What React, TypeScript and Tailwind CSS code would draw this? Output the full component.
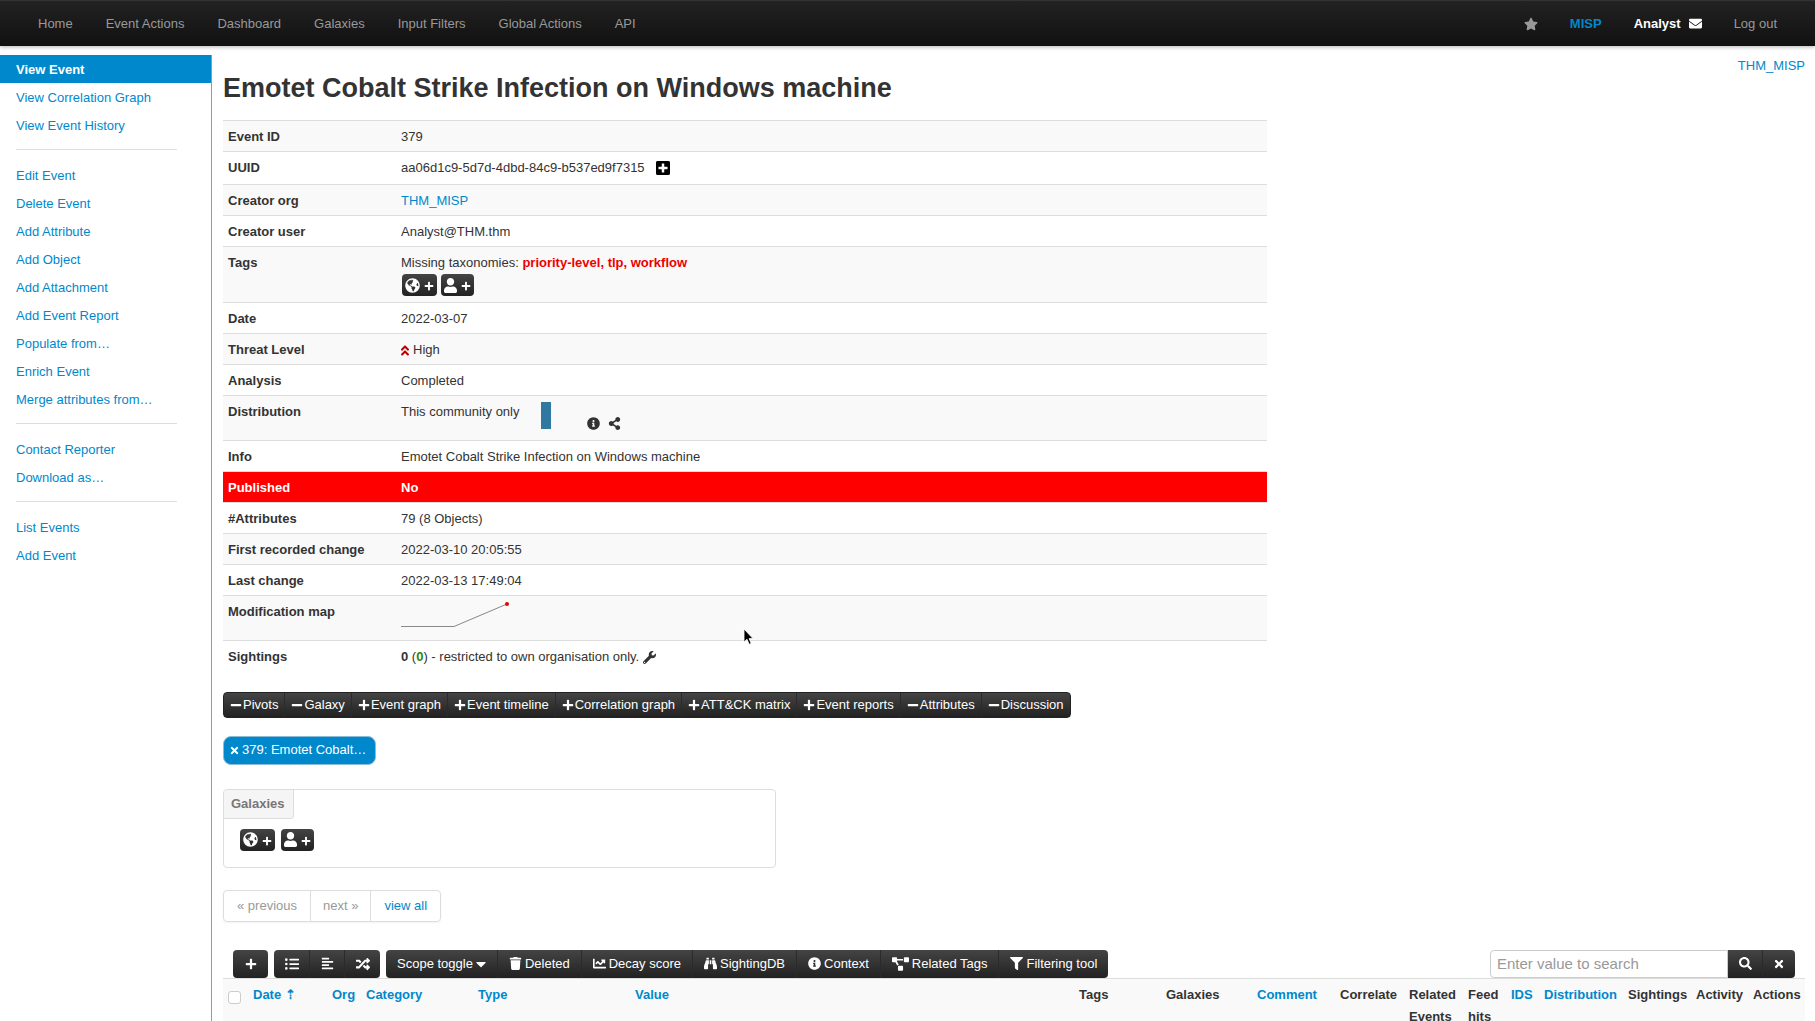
import React from 'react';
import {
  FaAlignLeft,
  FaAngleDoubleUp,
  FaBinoculars,
  FaCaretDown,
  FaChartLine,
  FaEnvelope,
  FaFilter,
  FaGlobeAmericas,
  FaInfoCircle,
  FaListUl,
  FaMinus,
  FaPlus,
  FaPlusSquare,
  FaProjectDiagram,
  FaRandom,
  FaSearch,
  FaShareAlt,
  FaStar,
  FaTimes,
  FaTrash,
  FaUser,
  FaWrench,
} from 'react-icons/fa';

const NAV = ['Home', 'Event Actions', 'Dashboard', 'Galaxies', 'Input Filters', 'Global Actions', 'API'];

const SIDE_MENU = [
  ['View Event', 'View Correlation Graph', 'View Event History'],
  [
    'Edit Event',
    'Delete Event',
    'Add Attribute',
    'Add Object',
    'Add Attachment',
    'Add Event Report',
    'Populate from…',
    'Enrich Event',
    'Merge attributes from…',
  ],
  ['Contact Reporter', 'Download as…'],
  ['List Events', 'Add Event'],
];

const SECTIONS = [
  { label: 'Pivots', open: true },
  { label: 'Galaxy', open: true },
  { label: 'Event graph', open: false },
  { label: 'Event timeline', open: false },
  { label: 'Correlation graph', open: false },
  { label: 'ATT&CK matrix', open: false },
  { label: 'Event reports', open: false },
  { label: 'Attributes', open: true },
  { label: 'Discussion', open: true },
];

const TOOLS = [
  { label: 'Deleted', icon: FaTrash },
  { label: 'Decay score', icon: FaChartLine },
  { label: 'SightingDB', icon: FaBinoculars },
  { label: 'Context', icon: FaInfoCircle },
  { label: 'Related Tags', icon: FaProjectDiagram },
  { label: 'Filtering tool', icon: FaFilter },
];

const COLUMNS = [
  { label: 'Date', width: 'w-[79px]', sortable: true },
  { label: 'Org', width: 'w-[34px]', sortable: true },
  { label: 'Category', width: 'w-[112px]', sortable: true },
  { label: 'Type', width: 'w-[157px]', sortable: true },
  { label: 'Value', width: '', sortable: true },
  { label: 'Tags', width: 'w-[87px]' },
  { label: 'Galaxies', width: 'w-[91px]' },
  { label: 'Comment', width: 'w-[83px]', sortable: true },
  { label: 'Correlate', width: 'w-[69px]' },
  { label: 'Related Events', width: 'w-[59px]' },
  { label: 'Feed hits', width: 'w-[43px]' },
  { label: 'IDS', width: 'w-[33px]', sortable: true },
  { label: 'Distribution', width: 'w-[84px]', sortable: true },
  { label: 'Sightings', width: 'w-[68px]' },
  { label: 'Activity', width: 'w-[57px]' },
  { label: 'Actions', width: 'w-[57px]' },
];

const DARK = 'bg-linear-to-b from-[#444] to-[#222] text-white';

const TagButtons: React.FC<{ gap: string }> = ({ gap }) => (
  <div className={`flex ${gap}`}>
    <button aria-label="Add global tag" className={`${DARK} flex h-[22px] items-center gap-1 rounded px-[3px]`}>
      <FaGlobeAmericas className="size-[15px]" />
      <FaPlus className="mt-[2px] size-[10px]" />
    </button>
    <button aria-label="Add local tag" className={`${DARK} flex h-[22px] items-center gap-1 rounded px-[3px]`}>
      <FaUser className="h-[15px] w-[13px]" />
      <FaPlus className="mt-[2px] size-[10px]" />
    </button>
  </div>
);

const Row: React.FC<{ label: string; height?: string; alert?: boolean; children: React.ReactNode }> = ({
  label,
  height = 'h-[31px]',
  alert,
  children,
}) => (
  <tr className={`${height} border-t border-[#ddd] align-top ${alert ? 'bg-[#f00] font-bold text-white' : 'odd:bg-[#f9f9f9]'}`}>
    <th scope="row" className="w-[173px] px-[5px] pt-[6px] text-left font-bold">{label}</th>
    <td className="px-[5px] pt-[6px]">{children}</td>
  </tr>
);

const App: React.FC = () => {
  return (
    <div className="relative flex min-h-screen flex-col bg-white font-['Liberation_Sans',Arial,sans-serif] text-[13px] leading-5 text-[#333]">
      <nav className="flex h-[46px] items-center justify-between border-t border-[#333] bg-linear-to-b from-[#222] to-[#111] px-[38px] text-[#999] shadow-[0_1px_4px_rgba(0,0,0,0.3)]">
        <div className="flex gap-[33px]">
          {NAV.map((item) => (
            <a key={item} href="#">{item}</a>
          ))}
        </div>
        <div className="flex items-center gap-8">
          <a href="#" aria-label="Bookmark"><FaStar className="size-[14px]" /></a>
          <a href="#" className="font-bold text-[#08c]">MISP</a>
          <a href="#" className="flex items-center gap-2 font-bold text-white">
            Analyst
            <FaEnvelope className="size-[13px]" />
          </a>
          <a href="#">Log out</a>
        </div>
      </nav>

      <div className="flex flex-1 pt-[9px]">
        <aside className="w-[212px] shrink-0 border-r border-[#999]">
          {SIDE_MENU.map((group, idx) => (
            <ul key={idx} className={idx > 0 ? 'relative mt-[10px] pt-3 before:absolute before:top-0 before:left-4 before:h-px before:w-[161px] before:bg-[#ddd]' : ''}>
              {group.map((item) => (
                <li key={item}>
                  <a
                    href="#"
                    className={`block px-4 pt-[5px] pb-[3px] ${item === 'View Event' ? 'bg-[#08c] font-bold text-white' : 'text-[#08c]'}`}
                  >
                    {item}
                  </a>
                </li>
              ))}
            </ul>
          ))}
        </aside>

        <main className="min-w-0 flex-1 pr-[10px] pl-[11px]">
          <div className="flex items-start justify-between">
            <h1 className="mt-[13px] mb-3 text-[27px] leading-10 font-bold">Emotet Cobalt Strike Infection on Windows machine</h1>
            <a href="#" className="pt-px text-[#08c]">THM_MISP</a>
          </div>

          <table className="w-[66%] border-collapse">
            <tbody>
              <Row label="Event ID">379</Row>
              <Row label="UUID" height="h-[33px]">
                <span className="flex items-center gap-[10px]">
                  aa06d1c9-5d7d-4dbd-84c9-b537ed9f7315
                  <FaPlusSquare className="size-4 text-black" />
                </span>
              </Row>
              <Row label="Creator org"><a href="#" className="text-[#08c]">THM_MISP</a></Row>
              <Row label="Creator user">Analyst@THM.thm</Row>
              <Row label="Tags" height="h-[56px]">
                <div>Missing taxonomies: <b className="text-[#e00]">priority-level, tlp, workflow</b></div>
                <div className="mt-px pl-px"><TagButtons gap="gap-1" /></div>
              </Row>
              <Row label="Date">2022-03-07</Row>
              <Row label="Threat Level">
                <span className="flex items-center gap-1">
                  <FaAngleDoubleUp className="h-[13px] w-2 text-[#b00]" viewBox="24 0 272 512" />
                  High
                </span>
              </Row>
              <Row label="Analysis">Completed</Row>
              <Row label="Distribution" height="h-[45px]">
                <div className="flex items-start">
                  This community only
                  <span className="ml-[22px] h-[27px] w-[10px] bg-[#3178a0]"></span>
                  <span className="mt-[15px] ml-9 flex gap-2">
                    <FaInfoCircle className="size-[13px]" />
                    <FaShareAlt className="size-[13px]" />
                  </span>
                </div>
              </Row>
              <Row label="Info">Emotet Cobalt Strike Infection on Windows machine</Row>
              <Row label="Published" alert>No</Row>
              <Row label="#Attributes">79 (8 Objects)</Row>
              <Row label="First recorded change">2022-03-10 20:05:55</Row>
              <Row label="Last change">2022-03-13 17:49:04</Row>
              <Row label="Modification map" height="h-[45px]">
                <svg className="block" width="110" height="28" viewBox="0 0 110 28">
                  <path d="M0 24.5H53L106 2" fill="none" stroke="#888" />
                  <circle cx="106" cy="2" r="2" fill="#e00" />
                </svg>
              </Row>
              <Row label="Sightings">
                <span className="flex items-center gap-1">
                  <span><b>0</b> (<b className="text-[#2a8a00]">0</b>) - restricted to own organisation only.</span>
                  <FaWrench className="size-[13px]" />
                </span>
              </Row>
            </tbody>
          </table>

          <div className={`${DARK} mt-5 flex h-[26px] w-fit overflow-hidden rounded border border-[#222]`}>
            {SECTIONS.map(({ label, open }) => (
              <button key={label} className="flex items-center gap-px border-l border-[#2b2b2b] px-[6px] first:border-l-0">
                {open ? <FaMinus className="size-3" /> : <FaPlus className="size-3" />}
                {label}
              </button>
            ))}
          </div>

          <button className="mt-[18px] flex h-[29px] w-[153px] items-center gap-[2px] rounded-lg border border-[#8bbdd9] bg-[#08c] px-[5px] text-white">
            <FaTimes className="size-[11px]" />
            379: Emotet Cobalt…
          </button>

          <section className="mt-6 h-[79px] w-[553px] rounded border border-[#ddd]">
            <h2 className="w-[70px] rounded-tl rounded-br border-r border-b border-[#ddd] bg-[#f5f5f5] px-[7px] py-1 font-bold text-[#777]">Galaxies</h2>
            <div className="mt-[10px] pl-4"><TagButtons gap="gap-[6px]" /></div>
          </section>

          <div className="mt-[22px] flex h-8 w-fit divide-x divide-[#ddd] rounded border border-[#ddd] text-[#999] shadow-[0_1px_2px_rgba(0,0,0,0.05)]">
            <button className="px-[13px]">« previous</button>
            <button className="px-3">next »</button>
            <button className="px-[13px] text-[#08c]">view all</button>
          </div>

          <div className="mt-7 flex h-7 items-stretch justify-between px-[10px]">
            <div className="flex gap-[6px]">
              <button aria-label="Add attribute" className={`${DARK} flex w-[35px] items-center justify-center rounded`}>
                <FaPlus className="size-3" />
              </button>
              <div className={`${DARK} flex divide-x divide-[#2b2b2b] overflow-hidden rounded`}>
                <button aria-label="List view" className="flex w-9 items-center justify-center"><FaListUl className="size-[14px]" /></button>
                <button aria-label="Align view" className="flex w-[35px] items-center justify-center"><FaAlignLeft className="size-[13px]" /></button>
                <button aria-label="Shuffle" className="flex w-[35px] items-center justify-center"><FaRandom className="size-[14px]" /></button>
              </div>
              <div className={`${DARK} flex divide-x divide-[#2b2b2b] overflow-hidden rounded`}>
                <button className="flex items-center gap-[3px] px-[11px]">
                  Scope toggle
                  <FaCaretDown className="h-4 w-[10px]" />
                </button>
                {TOOLS.map(({ label, icon: Icon }) => (
                  <button key={label} className="flex items-center gap-[3px] px-[11px]">
                    <Icon className={label === 'Related Tags' ? 'h-[14px] w-[17px]' : 'size-[13px]'} />
                    {label}
                  </button>
                ))}
              </div>
            </div>
            <div className="flex">
              <input
                type="text"
                aria-label="Search attributes"
                placeholder="Enter value to search"
                className="w-[238px] rounded-l border border-[#ccc] px-[6px] text-[15px] placeholder:text-[#999]"
              />
              <button aria-label="Search" className={`${DARK} flex w-[35px] items-center justify-center border-r border-[#2b2b2b]`}>
                <FaSearch className="size-[13px]" />
              </button>
              <button aria-label="Clear" className={`${DARK} flex w-8 items-center justify-center rounded-r`}>
                <FaTimes className="size-3" />
              </button>
            </div>
          </div>

          <table className="w-full table-fixed border-collapse">
            <thead>
              <tr className="border-t border-[#ddd] bg-[#f9f9f9] text-left align-top leading-[22px]">
                <th className="w-[25px] pt-3 pl-[5px]">
                  <input type="checkbox" aria-label="Select all" className="block size-[13px] appearance-none rounded-[3px] border border-[#ccc] bg-white" />
                </th>
                {COLUMNS.map(({ label, width, sortable }) => (
                  <th key={label} scope="col" className={`${width} pt-[5px] pb-1 pl-[5px] font-bold`}>
                    {sortable ? <a href="#" className="text-[#08c]">{label}{label === 'Date' && ' ⇡'}</a> : label}
                  </th>
                ))}
              </tr>
            </thead>
          </table>
        </main>
      </div>

      {/* Mouse pointer */}
      <svg className="absolute top-[628px] left-[743px]" width="12" height="18" viewBox="0 0 12 18">
        <path d="M1 1v13l3-2.7 2.2 5 2-.9-2.1-4.8H10z" fill="#000" stroke="#fff" strokeWidth="0.8" />
      </svg>
    </div>
  );
};

export default App;
